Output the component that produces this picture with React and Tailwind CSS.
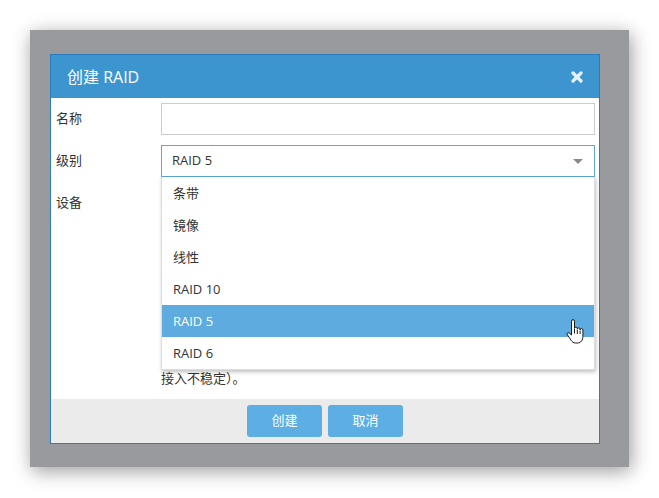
const FONT = { fontFamily: '"Open Sans", "Noto Sans CJK SC", sans-serif' };

const LEVELS = ["条带", "镜像", "线性", "RAID 10", "RAID 5", "RAID 6"];

function HandCursor() {
  return (
    <svg width="19" height="26" viewBox="0 0 19 26" className="absolute right-[9px] top-[14px]">
      <path
        d="M5.5 14 V2.2 a1.5 1.5 0 0 1 3 0 V9.5 a1.4 1.4 0 0 1 2.8 0 V10.3 a1.4 1.4 0 0 1 2.8 0 V11 a1.4 1.4 0 0 1 2.8 0 V17.5 c0 3.5-2 6.5-5.2 6.5 H9.5 c-2 0-3.2-1-4.3-2.6 L1.4 15.8 c-.9-1.1.3-2.7 1.7-1.9 L5.5 16 Z"
        fill="#fff"
        stroke="#1a1a1a"
        strokeWidth="1"
        strokeLinejoin="round"
      />
      <path d="M8.5 10v4.5 M11.3 11v4 M14.1 11.5v3.5" stroke="#1a1a1a" strokeWidth="1" />
    </svg>
  );
}

export default function App() {
  return (
    <div className="w-[659px] h-[498px] bg-white pt-[30px] pl-[30px]" style={FONT}>
      <div className="w-[599px] h-[437px] bg-[#989a9e] pt-[24px] pl-[20px] shadow-[2px_4px_18px_rgba(0,0,0,0.4)]">
        <div className="w-[550px] h-[390px] border border-[#2b7dbd] bg-white flex flex-col">
          {/* Header */}
          <div className="h-[43px] bg-[#3c95cf] flex items-center justify-between pl-[16px] pr-[16px]">
            <span className="text-white text-[16px]">创建 RAID</span>
            <svg width="12" height="12" viewBox="0 0 12 12">
              <path d="M2 2 L10 10 M10 2 L2 10" stroke="#e6f2fb" strokeWidth="3.2" strokeLinecap="round" />
            </svg>
          </div>

          {/* Body */}
          <div className="flex-1 pt-[5px] pl-[5px] pr-[4px] text-[13px] text-[#333] grid grid-cols-[105px_1fr] gap-y-[10px] content-start">
            <div className="h-[32px] flex items-center">名称</div>
            <input className="h-[32px] border border-[#ccc] outline-none px-[10px]" />

            <div className="h-[32px] flex items-center">级别</div>
            <div className="relative">
              <div className="h-[32px] border border-[#5aa8dc] flex items-center justify-between pl-[10px] pr-[11px]">
                <span>RAID 5</span>
                <svg width="10" height="5" viewBox="0 0 10 5">
                  <path d="M0 0 H10 L5 5 Z" fill="#8a8a8a" />
                </svg>
              </div>
              <ul className="absolute left-0 right-0 top-full z-10 bg-white border border-[#ddd] border-t-0 shadow-[1px_2px_4px_rgba(0,0,0,0.25)]">
                {LEVELS.map((lv) => (
                  <li
                    key={lv}
                    className={
                      "relative h-[32px] flex items-center pl-[11px] pt-[1px] " +
                      (lv === "RAID 5" ? "bg-[#5dabdf] text-white" : "text-[#333]")
                    }
                  >
                    {lv}
                    {lv === "RAID 5" && <HandCursor />}
                  </li>
                ))}
              </ul>
            </div>

            <div className="h-[32px] flex items-start pt-[6px]">设备</div>
            <div className="pt-[181px] leading-[20px]">接入不稳定）。</div>
          </div>

          {/* Footer */}
          <div className="h-[44px] bg-[#ebebeb] flex items-center justify-center gap-[6px]">
            <button className="w-[75px] h-[32px] rounded-[3px] bg-[#5daee2] text-white text-[13px]">创建</button>
            <button className="w-[75px] h-[32px] rounded-[3px] bg-[#5daee2] text-white text-[13px]">取消</button>
          </div>
        </div>
      </div>
    </div>
  );
}
